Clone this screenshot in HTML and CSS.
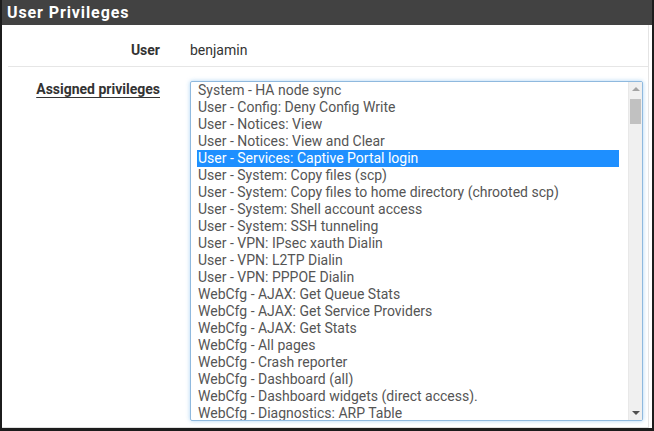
FILE: index.html
```html
<!DOCTYPE html>
<html>
<head>
<meta charset="utf-8">
<link rel="stylesheet" href="styles.css">
</head>
<body>
<div class="panel">
  <div class="panel-heading">User Privileges</div>
  <div class="panel-body">
    <div class="row row-user">
      <div class="label">User</div>
      <div class="value">benjamin</div>
    </div>
    <div class="row row-priv">
      <div class="label"><span class="ul">Assigned privileges</span></div>
      <div class="listbox">
        <div class="items">
          <div class="item">System - HA node sync</div>
          <div class="item">User - Config: Deny Config Write</div>
          <div class="item">User - Notices: View</div>
          <div class="item">User - Notices: View and Clear</div>
          <div class="item selected">User - Services: Captive Portal login</div>
          <div class="item">User - System: Copy files (scp)</div>
          <div class="item">User - System: Copy files to home directory (chrooted scp)</div>
          <div class="item">User - System: Shell account access</div>
          <div class="item">User - System: SSH tunneling</div>
          <div class="item">User - VPN: IPsec xauth Dialin</div>
          <div class="item">User - VPN: L2TP Dialin</div>
          <div class="item">User - VPN: PPPOE Dialin</div>
          <div class="item">WebCfg - AJAX: Get Queue Stats</div>
          <div class="item">WebCfg - AJAX: Get Service Providers</div>
          <div class="item">WebCfg - AJAX: Get Stats</div>
          <div class="item">WebCfg - All pages</div>
          <div class="item">WebCfg - Crash reporter</div>
          <div class="item">WebCfg - Dashboard (all)</div>
          <div class="item">WebCfg - Dashboard widgets (direct access).</div>
          <div class="item">WebCfg - Diagnostics: ARP Table</div>
        </div>
        <div class="scrollbar">
          <div class="arrow up"></div>
          <div class="track"><div class="thumb"></div></div>
          <div class="arrow down"></div>
        </div>
      </div>
    </div>
  </div>
</div>
</body>
</html>
```

FILE: styles.css
```css
* { box-sizing: border-box; }
html, body { margin: 0; padding: 0; background: #fff; }
body { font-family: Roboto, "Liberation Sans", sans-serif; }

.panel {
  width: 654px;
  height: 431px;
  border-left: 2px solid #1c1c1c;
  border-right: 2px solid #1c1c1c;
  border-bottom: 3px solid #1c1c1c;
  display: flex;
  flex-direction: column;
  overflow: hidden;
  background: #fff;
}

.panel-heading {
  height: 25px;
  background: #424242;
  color: #fff;
  font-weight: bold;
  font-size: 16px;
  line-height: 25px;
  padding-left: 5px;
  letter-spacing: 0.9px;
}

.panel-body {
  flex: 1;
  display: flex;
  flex-direction: column;
  border-right: 1px solid #e4e4e4;
  margin-right: 3px;
  border-bottom: 1px solid #e0e0e0;
}

.row {
  display: flex;
  margin-left: 6px;
  font-size: 14px;
  color: #333;
}

.label {
  width: 152px;
  text-align: right;
  font-weight: bold;
  color: #333;
}

.row-user {
  height: 42px;
  align-items: center;
  border-bottom: 1px solid #e6e6e6;
  padding-top: 8px;
}

.row-user .value {
  margin-left: 30px;
  color: #333;
}

.row-priv {
  padding-top: 14px;
  align-items: flex-start;
}

.row-priv .label {
  line-height: 17px;
}

.ul {
  text-decoration: underline;
  text-underline-offset: 3px;
}

.listbox {
  margin-left: 30px;
  width: 453px;
  height: 340px;
  border: 1px solid #8fb9de;
  box-shadow: 0 0 4px rgba(102, 175, 233, 0.55);
  border-radius: 2px;
  display: flex;
  overflow: hidden;
  background: #fff;
}

.items {
  flex: 1;
  padding-left: 6px;
  padding-right: 9px;
  overflow: hidden;
}

.item {
  height: 17px;
  line-height: 17px;
  padding-left: 1px;
  white-space: nowrap;
  color: #555;
  font-size: 14px;
}

.item.selected {
  background: #1e8fff;
  color: #fff;
}

.scrollbar {
  width: 14px;
  background: #f0f0f0;
  border-left: 1px solid #e8e8e8;
  display: flex;
  flex-direction: column;
}

.arrow {
  height: 14px;
  position: relative;
}

.arrow::after {
  content: "";
  position: absolute;
  left: 3px;
  width: 0;
  height: 0;
  border-left: 4px solid transparent;
  border-right: 4px solid transparent;
}

.arrow.up::after {
  top: 5px;
  border-bottom: 4px solid #a3a3a3;
}

.arrow.down::after {
  top: 5px;
  border-top: 4px solid #505050;
}

.track {
  flex: 1;
  padding: 3px 1px 0 1px;
}

.thumb {
  height: 25px;
  background: #c1c1c1;
}
```
